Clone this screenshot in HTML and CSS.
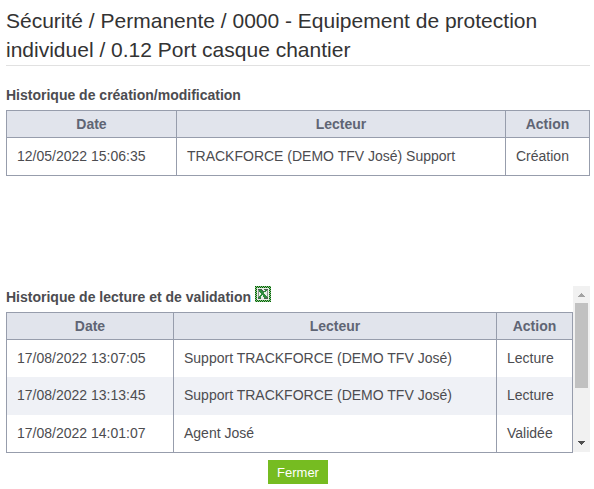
FILE: index.html
```html
<!DOCTYPE html>
<html lang="fr">
<head>
    <meta charset="UTF-8">
    <meta name="viewport" content="width=device-width, initial-scale=1.0">
    <title>Historique</title>
    <link rel="stylesheet" href="styles.css">
</head>
<body>
    <div class="popup">
        <h1 class="title">Sécurité / Permanente / 0000 - Equipement de protection individuel / 0.12 Port casque chantier</h1>
        <div class="creation">
            <h2 class="subtitle">Historique de création/modification</h2>
            <table class="grid">
                <colgroup>
                    <col class="c-date">
                    <col class="c-lecteur">
                    <col class="c-action">
                </colgroup>
                <thead>
                    <tr><th>Date</th><th>Lecteur</th><th>Action</th></tr>
                </thead>
                <tbody>
                    <tr><td>12/05/2022 15:06:35</td><td>TRACKFORCE (DEMO TFV José) Support</td><td>Création</td></tr>
                </tbody>
            </table>
        </div>
        <div class="lecture">
            <div class="lecture-content">
                <h2 class="subtitle">
                    <span>Historique de lecture et de validation</span>
                    <svg class="excel" width="16" height="16" viewBox="0 0 16 16" shape-rendering="crispEdges">
                        <defs>
                            <pattern id="dots" width="2" height="2" patternUnits="userSpaceOnUse">
                                <path fill="#006400" d="M0 0h2v2h-2z"/>
                                <path fill="#8fc08f" d="M1 0h1v1h-1zM0 1h1v1h-1z"/>
                            </pattern>
                        </defs>
                        <path fill="url(#dots)" d="M0 0h16v16h-16z"/>
                        <path fill="#e9eee9" d="M2 2h12v12h-12z"/>
                        <path fill="#4a5c4e" d="M3 3h4v1h-4zM4 4h4v1h-4zM9 3h4v1h-4zM8 5h1v1h-1zM3 12h3v1h-3zM9 12h4v1h-4zM10 11h3v1h-3z"/>
                        <path fill="#2c8a3c" d="M4 4h3v1h-3zM4 5h4v1h-4zM5 6h4v1h-4zM6 7h3v1h-3zM6 8h4v1h-4zM5 9h2v1h-2zM8 9h3v1h-3zM4 10h2v1h-2zM8 10h4v1h-4zM3 11h3v1h-3zM9 11h3v1h-3zM10 4h2v1h-2zM9 5h2v1h-2z"/>
                        <path fill="#8b958d" d="M12 4h1v7h-1zM3 4h1v7h-1z"/>
                    </svg>
                </h2>
                <table class="grid striped">
                    <colgroup>
                        <col class="c-date">
                        <col class="c-lecteur">
                        <col class="c-action">
                    </colgroup>
                    <thead>
                        <tr><th>Date</th><th>Lecteur</th><th>Action</th></tr>
                    </thead>
                    <tbody>
                        <tr><td>17/08/2022 13:07:05</td><td>Support TRACKFORCE (DEMO TFV José)</td><td>Lecture</td></tr>
                        <tr><td>17/08/2022 13:13:45</td><td>Support TRACKFORCE (DEMO TFV José)</td><td>Lecture</td></tr>
                        <tr><td>17/08/2022 14:01:07</td><td>Agent José</td><td>Validée</td></tr>
                    </tbody>
                </table>
            </div>
            <div class="scrollbar">
                <svg class="arrow" width="17" height="17" viewBox="0 0 17 17" shape-rendering="crispEdges"><path fill="#a3a3a3" d="M8 7h1v1h-1zM7 8h3v1h-3zM6 9h5v1h-5zM5 10h7v1h-7z"/></svg>
                <div class="thumb"></div>
                <svg class="arrow down" width="17" height="17" viewBox="0 0 17 17" shape-rendering="crispEdges"><path fill="#505050" d="M5 6h7v1h-7zM6 7h5v1h-5zM7 8h3v1h-3zM8 9h1v1h-1z"/></svg>
            </div>
        </div>
        <div class="footer">
            <button class="btn" type="button">Fermer</button>
        </div>
    </div>
</body>
</html>
```
FILE: styles.css
```css
body{
    margin: 0;
    background-color: #fff;
    color: #4c4c50;
    font-family: "Liberation Sans", Arial, sans-serif;
    font-size: 14px;
    overflow: hidden;
}
.popup{
    width: 584px;
    padding: 6px 4px 0 6px;
}
.title{
    margin: 0;
    padding-bottom: 1px;
    border-bottom: 1px solid #e1e1e1;
    color: #333;
    font-size: 21px;
    font-weight: normal;
    line-height: 29px;
}
.creation{
    height: 200px;
    padding-top: 20px;
}
.subtitle{
    display: flex;
    margin: 0;
    height: 24px;
    font-size: 14px;
    line-height: 18px;
}
.grid{
    width: 100%;
    table-layout: fixed;
    border-collapse: separate;
    border-spacing: 0;
    border-top: 1px solid #979dac;
    border-left: 1px solid #979dac;
}
.grid th, .grid td{
    box-sizing: border-box;
    border-right: 1px solid #979dac;
    line-height: 16px;
    white-space: nowrap;
}
.grid th{
    height: 27px;
    padding: 0;
    border-bottom: 1px solid #979dac;
    background-color: #e1e4ec;
    color: #5f6574;
}
.grid td{
    height: 38px;
    padding: 10px 10px 0;
    vertical-align: top;
}
.grid tr:last-child td{
    border-bottom: 1px solid #979dac;
}
.c-date{
    width: 170px;
}
.c-action{
    width: 84px;
}
.striped .c-date{
    width: 167px;
}
.striped .c-action{
    width: 76px;
}
.striped tbody tr:first-child td{
    height: 37px;
}
.striped tbody tr:nth-child(even){
    background-color: #eff1f6;
}
.lecture{
    display: flex;
    height: 167px;
}
.lecture-content{
    flex: 1;
}
.lecture .subtitle{
    height: 26px;
    line-height: 22px;
}
.excel{
    margin-left: 4px;
}
.scrollbar{
    display: flex;
    flex-direction: column;
    width: 17px;
    height: 166px;
    background-color: #f1f1f1;
}
.thumb{
    height: 85px;
    margin: 0 2px;
    background-color: #c1c1c1;
}
.down{
    margin-top: auto;
}
.footer{
    display: flex;
    justify-content: center;
    padding: 7px 0 5px;
}
.btn{
    width: 60px;
    height: 24px;
    padding: 0;
    border: 0;
    background-color: #76bc21;
    color: #fff;
    font-family: inherit;
    font-size: 13px;
}
```
